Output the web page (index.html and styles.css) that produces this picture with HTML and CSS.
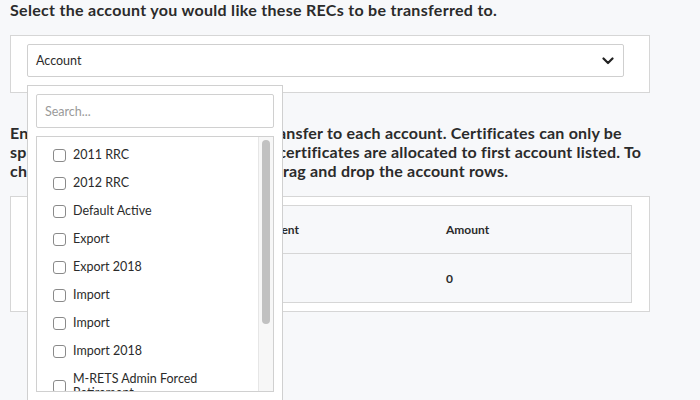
FILE: index.html
```html
<!DOCTYPE html>
<html lang="en">
<head>
<meta charset="utf-8">
<title>Transfer RECs</title>
<link rel="stylesheet" href="styles.css">
</head>
<body>
<main class="page">
  <h2 class="title">Select the account you would like these RECs to be transferred to.</h2>
  <section class="card card-select">
    <div class="select-wrap">
      <div class="select">
        <span class="select-value">Account</span>
        <svg class="chevron" width="12" height="8" viewBox="0 0 12 8"><path d="M1.5 1.5 L6 6 L10.5 1.5" fill="none" stroke="#222" stroke-width="2.2" stroke-linecap="round" stroke-linejoin="round"/></svg>
      </div>
      <div class="dropdown">
        <div class="search">Search...</div>
        <div class="listbox">
          <ul class="options">
            <li class="option"><span class="cb"></span><span class="opt-label">2011 RRC</span></li>
            <li class="option"><span class="cb"></span><span class="opt-label">2012 RRC</span></li>
            <li class="option"><span class="cb"></span><span class="opt-label">Default Active</span></li>
            <li class="option"><span class="cb"></span><span class="opt-label">Export</span></li>
            <li class="option"><span class="cb"></span><span class="opt-label">Export 2018</span></li>
            <li class="option"><span class="cb"></span><span class="opt-label">Import</span></li>
            <li class="option"><span class="cb"></span><span class="opt-label">Import</span></li>
            <li class="option"><span class="cb"></span><span class="opt-label">Import 2018</span></li>
            <li class="option"><span class="cb"></span><span class="opt-label">M-RETS Admin Forced Retirement</span></li>
            <li class="option"><span class="cb"></span><span class="opt-label">Retired 2019</span></li>
          </ul>
          <div class="scrollbar"><div class="thumb"></div></div>
        </div>
      </div>
    </div>
  </section>
  <p class="intro">Enter how many RECs you'd like to transfer to each account. Certificates can only be split into whole numbers. Remaining certificates are allocated to first account listed. To change the order of these accounts, drag and drop the account rows.</p>
  <section class="card card-table">
    <div class="table">
      <div class="row head"><div class="cell"></div><div class="cell">Recipient</div><div class="cell">Amount</div></div>
      <div class="row"><div class="cell"></div><div class="cell"></div><div class="cell">0</div></div>
    </div>
  </section>
</main>
</body>
</html>
```
FILE: styles.css
```css
* { box-sizing: border-box; }
html, body { margin: 0; padding: 0; }
body {
  background: #f7f8fa;
  font-family: "Lato", "Open Sans", sans-serif;
  color: #2b2b2b;
  width: 700px;
  height: 400px;
  overflow: hidden;
}
.page { padding: 0 10px; }
.title {
  margin: 0;
  font-size: 16px;
  letter-spacing: 0.3px;
  line-height: 20px;
  font-weight: 700;
  height: 35px;
}
.card {
  background: #fff;
  border: 1px solid #d6d6d6;
  width: 640px;
}
.card-select { padding: 8px 25px 16px 16px; height: 58px; }
.select-wrap { position: relative; }
.select {
  height: 33px;
  border: 1px solid #cfcfcf;
  border-radius: 2px;
  display: flex;
  align-items: center;
  justify-content: space-between;
  padding: 0 9px 0 8px;
  font-size: 12.5px;
  background: #fff;
}
.dropdown {
  position: absolute;
  top: 41px;
  left: 0;
  width: 256px;
  height: 320px;
  background: #fff;
  border: 1px solid #d0d0d0;
  padding: 8px;
  z-index: 2;
}
.search {
  height: 34px;
  border: 1px solid #d0d0d0;
  border-radius: 2px;
  padding: 0 8px;
  display: flex;
  align-items: center;
  font-size: 12.5px;
  color: #9a9a9a;
}
.listbox {
  margin-top: 8px;
  height: 256px;
  border: 1px solid #d0d0d0;
  display: flex;
  overflow: hidden;
}
.options {
  list-style: none;
  margin: 0;
  padding: 4px 8px 0 16px;
  flex: 1;
}
.option {
  display: flex;
  align-items: center;
  gap: 7px;
  padding: 7px 0;
  font-size: 12.5px;
  line-height: 14px;
}
.cb {
  width: 13px;
  height: 13px;
  flex: none;
  border: 1px solid #8a8a8a;
  border-radius: 3px;
  background: #fff;
}
.opt-label { max-width: 150px; }
.scrollbar {
  width: 15px;
  flex: none;
  background: #f7f7f7;
  border-left: 1px solid #e6e6e6;
  padding: 3px 3px 0 3px;
}
.thumb {
  width: 8px;
  height: 184px;
  border-radius: 4px;
  background: #c1c1c1;
}
.intro {
  margin: 30px 0 16px;
  font-size: 16px;
  letter-spacing: 0.2px;
  line-height: 19px;
  font-weight: 700;
  width: 640px;
}
.card-table { padding: 8px 17px 8px 16px; }
.table { border: 1px solid #d6d6d6; background: #f7f8fa; }
.row {
  display: grid;
  grid-template-columns: 205px 197px 1fr;
  height: 48px;
  align-items: center;
  font-size: 12px;
  font-weight: 700;
}
.row.head { border-bottom: 1px solid #d6d6d6; }
.cell { padding-left: 16px; }
```
